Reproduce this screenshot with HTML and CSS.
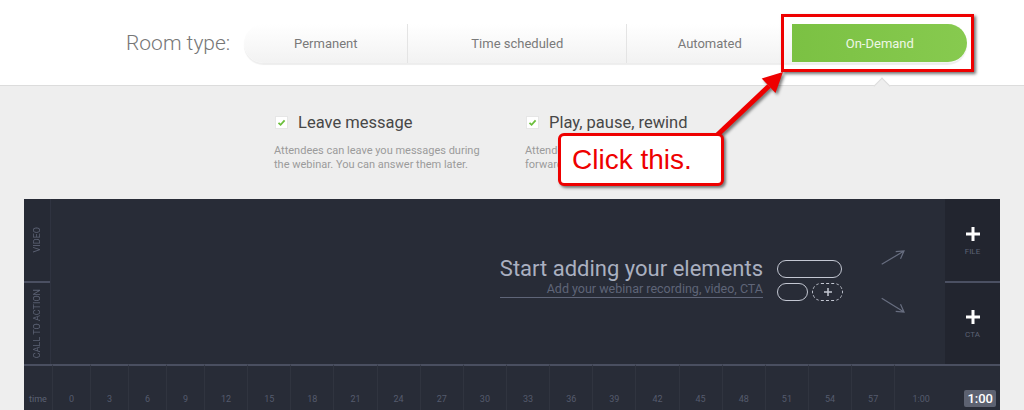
FILE: index.html
```html
<!DOCTYPE html>
<html>
<head>
    <link rel="stylesheet" href="styles.css">
    <title>Room type</title>
</head>
<body>
<header class="topbar">
    <span class="room-label">Room type:</span>
    <nav class="room-types">
        <button class="room-type room-type--permanent">Permanent</button>
        <button class="room-type room-type--scheduled">Time scheduled</button>
        <button class="room-type room-type--automated">Automated</button>
        <button class="room-type room-type--demand is-active">On-Demand</button>
    </nav>
    <span class="notch"></span>
</header>

<section class="options">
    <div class="option">
        <div class="option__title">
            <span class="checkbox"><svg width="13" height="13" viewBox="0 0 13 13"><path d="M3.5 6.8 L5.6 8.8 L9.6 4.4" fill="none" stroke="#6cbf3c" stroke-width="1.8"/></svg></span>
            Leave message
        </div>
        <p class="option__desc">Attendees can leave you messages during<br>the webinar. You can answer them later.</p>
    </div>
    <div class="option">
        <div class="option__title">
            <span class="checkbox"><svg width="13" height="13" viewBox="0 0 13 13"><path d="M3.5 6.8 L5.6 8.8 L9.6 4.4" fill="none" stroke="#6cbf3c" stroke-width="1.8"/></svg></span>
            Play, pause, rewind
        </div>
        <p class="option__desc">Attendees can pause, rewind and fast<br>forward the recording at any time.</p>
    </div>
</section>

<section class="editor">
    <div class="tracks">
        <div class="track-labels">
            <div class="track-label"><span>Video</span></div>
            <div class="track-label"><span>Call to action</span></div>
        </div>
        <div class="stage">
            <div class="intro">
                <div class="intro__title">Start adding your elements</div>
                <div class="intro__sub">Add your webinar recording, video, CTA</div>
            </div>
            <div class="pills">
                <span class="pill pill--wide"></span>
                <div class="pills__row">
                    <span class="pill"></span>
                    <span class="pill pill--dashed">
                        <svg width="10" height="10" viewBox="0 0 10 10"><path d="M5 1 V9 M1 5 H9" stroke="#c3c7d2" stroke-width="1.5"/></svg>
                    </span>
                </div>
            </div>
            <svg class="hints" width="28" height="70" viewBox="0 0 28 70">
                <g fill="none" stroke="#686e80" stroke-width="1.2">
                    <path d="M2.7 18.3 L25 5 M16.7 5.6 L25 5 L21.5 12.8"/>
                    <path d="M2.7 52.3 L25 66 M21.5 58.2 L25 66 L16.7 65.4"/>
                </g>
            </svg>
        </div>
        <div class="adders">
            <div class="adder">
                <svg width="14" height="14" viewBox="0 0 14 14"><path d="M7 0 V14 M0 7 H14" stroke="#ffffff" stroke-width="3"/></svg>
                <span>FILE</span>
            </div>
            <div class="adder">
                <svg width="14" height="14" viewBox="0 0 14 14"><path d="M7 0 V14 M0 7 H14" stroke="#ffffff" stroke-width="3"/></svg>
                <span>CTA</span>
            </div>
        </div>
    </div>
    <div class="timeline">
        <div class="tick tick--label">time</div>
        <div class="tick">0</div>
        <div class="tick">3</div>
        <div class="tick">6</div>
        <div class="tick">9</div>
        <div class="tick">12</div>
        <div class="tick">15</div>
        <div class="tick">18</div>
        <div class="tick">21</div>
        <div class="tick">24</div>
        <div class="tick">27</div>
        <div class="tick">30</div>
        <div class="tick">33</div>
        <div class="tick">36</div>
        <div class="tick">39</div>
        <div class="tick">42</div>
        <div class="tick">45</div>
        <div class="tick">48</div>
        <div class="tick">51</div>
        <div class="tick">54</div>
        <div class="tick">57</div>
        <div class="tick">1:00</div>
        <div class="tick tick--end"><span class="now">1:00</span></div>
    </div>
</section>

<!-- annotation drawn over the screenshot -->
<div class="highlight"></div>
<svg class="pointer" width="1024" height="410" viewBox="0 0 1024 410">
    <line x1="712" y1="140" x2="769" y2="86" stroke="#ee0000" stroke-width="5"/>
    <polygon points="783,72 775.5,93 761.7,78.6" fill="#ee0000"/>
</svg>
<div class="callout">Click this.</div>
</body>
</html>
```

FILE: styles.css
```css
*,
*::before,
*::after {
    box-sizing: border-box;
}

body {
    margin: 0;
    height: 410px;
    overflow: hidden;
    position: relative;
    background: #eeeeee;
    font-family: Roboto, 'Liberation Sans', sans-serif;
}

/* header */

.topbar {
    position: relative;
    height: 86px;
    display: flex;
    align-items: flex-start;
    padding: 24px 0 0 126px;
    background: #ffffff;
    border-bottom: 1px solid #dcdcdc;
}

.room-label {
    font-size: 21px;
    font-weight: 300;
    line-height: 39px;
    color: #777777;
    margin-right: 14px;
}

.room-types {
    display: flex;
    height: 39px;
    border-radius: 20px;
    background: linear-gradient(#ffffff, #f2f2f2);
    box-shadow: 0 2px 1px rgba(0, 0, 0, 0.07);
}

.room-type {
    border: 0;
    border-left: 1px solid #e4e4e4;
    background: none;
    font-family: inherit;
    font-size: 13px;
    color: #7a7a7a;
    padding: 0;
    cursor: pointer;
}

.room-type--permanent {
    width: 163px;
    border-left: 0;
}

.room-type--scheduled {
    width: 219px;
}

.room-type--automated {
    width: 166px;
}

.room-type--demand {
    width: 175px;
}

.room-type.is-active {
    height: 38px;
    border-left: 0;
    border-radius: 0 20px 20px 0;
    background: linear-gradient(to right, #7bc143, #87ca4f);
    color: #eef7e6;
}

.notch {
    position: absolute;
    left: 876px;
    top: 80px;
    width: 12px;
    height: 12px;
    background: #eeeeee;
    border-top: 1px solid #dcdcdc;
    border-left: 1px solid #dcdcdc;
    transform: rotate(45deg);
}

/* options */

.options {
    display: flex;
    height: 113px;
    padding: 28px 0 0 274px;
}

.option {
    width: 251px;
}

.option__title {
    display: flex;
    align-items: center;
    height: 16px;
    font-size: 16.5px;
    color: #474747;
}

.checkbox {
    display: inline-flex;
    width: 13px;
    height: 13px;
    margin: 0 10px 0 1px;
    background: #ffffff;
    border: 1px solid #e6e6e6;
}

.checkbox svg {
    margin: -1px;
}

.option__desc {
    margin: 14px 0 0;
    font-size: 11px;
    line-height: 14px;
    color: #9b9b9b;
}

/* editor */

.editor {
    margin: 0 24px;
    background: #282c37;
}

.tracks {
    display: flex;
    height: 165px;
}

.track-labels {
    width: 27px;
    display: flex;
    flex-direction: column;
    background: #262a35;
    border-right: 1px solid #2f3340;
}

.track-label {
    flex: 1;
    display: flex;
    align-items: center;
    justify-content: center;
}

.track-label + .track-label {
    border-top: 2px solid #4b5062;
}

.track-label span {
    writing-mode: vertical-rl;
    transform: rotate(180deg);
    font-size: 9px;
    text-transform: uppercase;
    color: #5c6274;
}

.stage {
    flex: 1;
    display: flex;
    align-items: center;
    justify-content: flex-end;
    padding: 0 38px 2px 0;
}

.intro {
    text-align: right;
    margin-bottom: 7px;
}

.intro__title {
    font-size: 22px;
    line-height: 24px;
    color: #aab0c0;
}

.intro__sub {
    font-size: 12.5px;
    line-height: 16px;
    color: #5f6578;
    border-bottom: 1px solid #5f6578;
}

.pills {
    display: flex;
    flex-direction: column;
    gap: 5px;
    margin: 0 36px 0 14px;
}

.pills__row {
    display: flex;
    gap: 4px;
}

.pill {
    display: flex;
    align-items: center;
    justify-content: center;
    width: 31px;
    height: 18px;
    border: 1.5px solid #c3c7d2;
    border-radius: 9px;
}

.pill--wide {
    width: 65px;
}

.pill--dashed {
    width: 31px;
    border-style: dashed;
}

.adders {
    width: 55px;
    display: flex;
    flex-direction: column;
    background: #22252f;
}

.adder {
    flex: 1;
    display: flex;
    flex-direction: column;
    align-items: center;
    justify-content: center;
    gap: 6px;
    padding-top: 3px;
}

.adder + .adder {
    border-top: 2px solid #4b5062;
}

.adder span {
    font-size: 8px;
    color: #5c6274;
}

.timeline {
    display: grid;
    grid-template-columns: 28px repeat(4, 38px) repeat(16, 43.15px) 53px 1fr;
    height: 60px;
}

.tick {
    border-top: 2px solid #4a4f60;
    border-left: 1px solid #30343f;
    padding-top: 27px;
    font-size: 9px;
    line-height: 12px;
    text-align: center;
    color: #555b6d;
}

.tick--label {
    border-left: 0;
    color: #5c6274;
}

.tick--end {
    border-left: 0;
    padding: 24px 4px 0 0;
    text-align: right;
}

.now {
    display: inline-block;
    padding: 0 3px;
    font-size: 13px;
    font-weight: 500;
    line-height: 17px;
    color: #ffffff;
    background: #5d6271;
    border-radius: 2px;
}

/* annotation */

.highlight {
    position: absolute;
    left: 781px;
    top: 14px;
    width: 193px;
    height: 58px;
    border: 3px solid #ee0000;
    box-shadow: 2px 2px 3px rgba(0, 0, 0, 0.55);
}

.pointer {
    position: absolute;
    left: 0;
    top: 0;
    pointer-events: none;
    filter: drop-shadow(2px 2px 1.5px rgba(0, 0, 0, 0.5));
}

.callout {
    position: absolute;
    left: 558px;
    top: 133px;
    width: 166px;
    height: 53px;
    display: flex;
    align-items: center;
    padding-left: 11px;
    background: #ffffff;
    border: 3px solid #ee0000;
    border-radius: 6px;
    box-shadow: 2px 2px 3px rgba(0, 0, 0, 0.5);
    font-family: 'Liberation Sans', Arial, sans-serif;
    font-size: 28px;
    color: #ee0000;
}
```
